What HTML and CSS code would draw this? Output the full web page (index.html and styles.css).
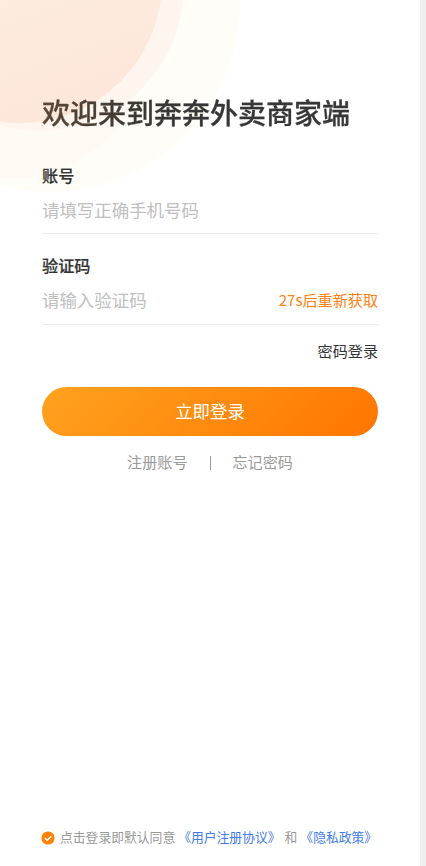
FILE: index.html
```html
<!DOCTYPE html>
<html lang="zh-CN">
<head>
<meta charset="utf-8">
<title>商家端登录</title>
<link rel="stylesheet" href="styles.css">
</head>
<body>
<main class="page">
  <svg class="backdrop" width="260" height="200" viewBox="0 0 260 200" aria-hidden="true">
    <defs>
      <linearGradient id="glow" x1="0.3" y1="0" x2="0.65" y2="1">
        <stop offset="0.1" stop-color="#fdf1e6"/>
        <stop offset="1" stop-color="#fde6d9"/>
      </linearGradient>
    </defs>
    <circle cx="50" cy="2" r="190" fill="#fffdf8"/>
    <circle cx="8" cy="38" r="141" fill="#fffaf4"/>
    <circle cx="40" cy="-12.5" r="143.5" fill="#fef5ee"/>
    <circle cx="20" cy="-19" r="142" fill="url(#glow)"/>
  </svg>
  <h1 class="title">欢迎来到奔奔外卖商家端</h1>
  <form class="form">
    <label class="label" for="phone">账号</label>
    <div class="field"><input class="input" id="phone" type="text" placeholder="请填写正确手机号码"></div>
    <label class="label" for="code">验证码</label>
    <div class="field"><input class="input" id="code" type="text" placeholder="请输入验证码"><span class="resend">27s后重新获取</span></div>
    <a class="switch">密码登录</a>
    <button class="submit" type="button">立即登录</button>
    <nav class="links"><a>注册账号</a><span class="divider"></span><a>忘记密码</a></nav>
  </form>
  <footer class="terms">
    <svg class="check" width="14" height="14" viewBox="0 0 14 14" aria-hidden="true">
      <circle cx="7" cy="7" r="6.6" fill="#ff8205"/>
      <path d="M3.8 7 6.2 9.3 10.3 5.2" fill="none" stroke="#fff" stroke-width="1.5"/>
    </svg>
    <span>点击登录即默认同意</span><a class="doc">《用户注册协议》</a><span>和</span><a class="doc">《隐私政策》</a>
  </footer>
</main>
</body>
</html>
```

FILE: styles.css
```css
* { box-sizing: border-box; }
body {
  margin: 0;
  background: #efefef;
  font-family: "Noto Sans CJK SC", sans-serif;
  color: #333;
}
.page {
  position: relative;
  display: flex;
  flex-direction: column;
  width: 420px;
  height: 866px;
  padding: 91px 42px 19px;
  background: #fff;
}
.backdrop { position: absolute; top: 0; left: 0; }
.title {
  position: relative;
  margin: 0;
  font-size: 28px;
  line-height: 42px;
  font-weight: 500;
  white-space: nowrap;
  color: transparent;
  background: linear-gradient(100deg, #5c4838, #3c3832 28%, #363636 45%);
  -webkit-background-clip: text;
  background-clip: text;
  -webkit-text-stroke: 0.3px transparent;
}
.form { position: relative; display: flex; flex-direction: column; }
.label {
  margin-top: 30px;
  font-size: 16.2px;
  line-height: 24px;
  font-weight: 500;
  -webkit-text-stroke: 0.2px #333;
}
.label ~ .label { margin-top: 19px; }
.field {
  display: flex;
  align-items: center;
  height: 47px;
  border-bottom: 1px solid #ececec;
}
.label ~ .label + .field { height: 48px; }
.input {
  flex: 1;
  min-width: 0;
  padding: 0;
  margin: 0;
  border: 0;
  outline: 0;
  background: none;
  font: 400 17.45px/26px "Noto Sans CJK SC", sans-serif;
}
.input::placeholder { color: #c0c0c0; }
.label ~ .label + .field .input { margin-bottom: 1px; }
.resend { margin-bottom: 3px; color: #ff8210; font-size: 15.1px; line-height: 24px; }
.switch { align-self: flex-end; margin-top: 13px; font-size: 15.1px; line-height: 24px; }
.submit {
  height: 49px;
  margin-top: 25px;
  padding: 0 0 1px;
  border: 0;
  border-radius: 25px;
  background: linear-gradient(135deg, #ffa21f, #ff7500);
  color: #fff;
  font: 400 17.4px/26px "Noto Sans CJK SC", sans-serif;
}
.links {
  display: flex;
  justify-content: center;
  align-items: center;
  margin-top: 13px;
  color: #999;
  font-size: 15.1px;
  line-height: 24px;
}
.divider { width: 1px; height: 14px; margin: 4px 22px 0; background: #999; }
.terms {
  display: flex;
  align-items: center;
  margin-top: auto;
  height: 20px;
  font-size: 12.8px;
  line-height: 20px;
  color: #999;
  white-space: nowrap;
}
.check { flex: none; margin: 1px 5px 0 -1px; }
.doc { margin: 0 4px 0 3px; color: #3f7be8; }
```
